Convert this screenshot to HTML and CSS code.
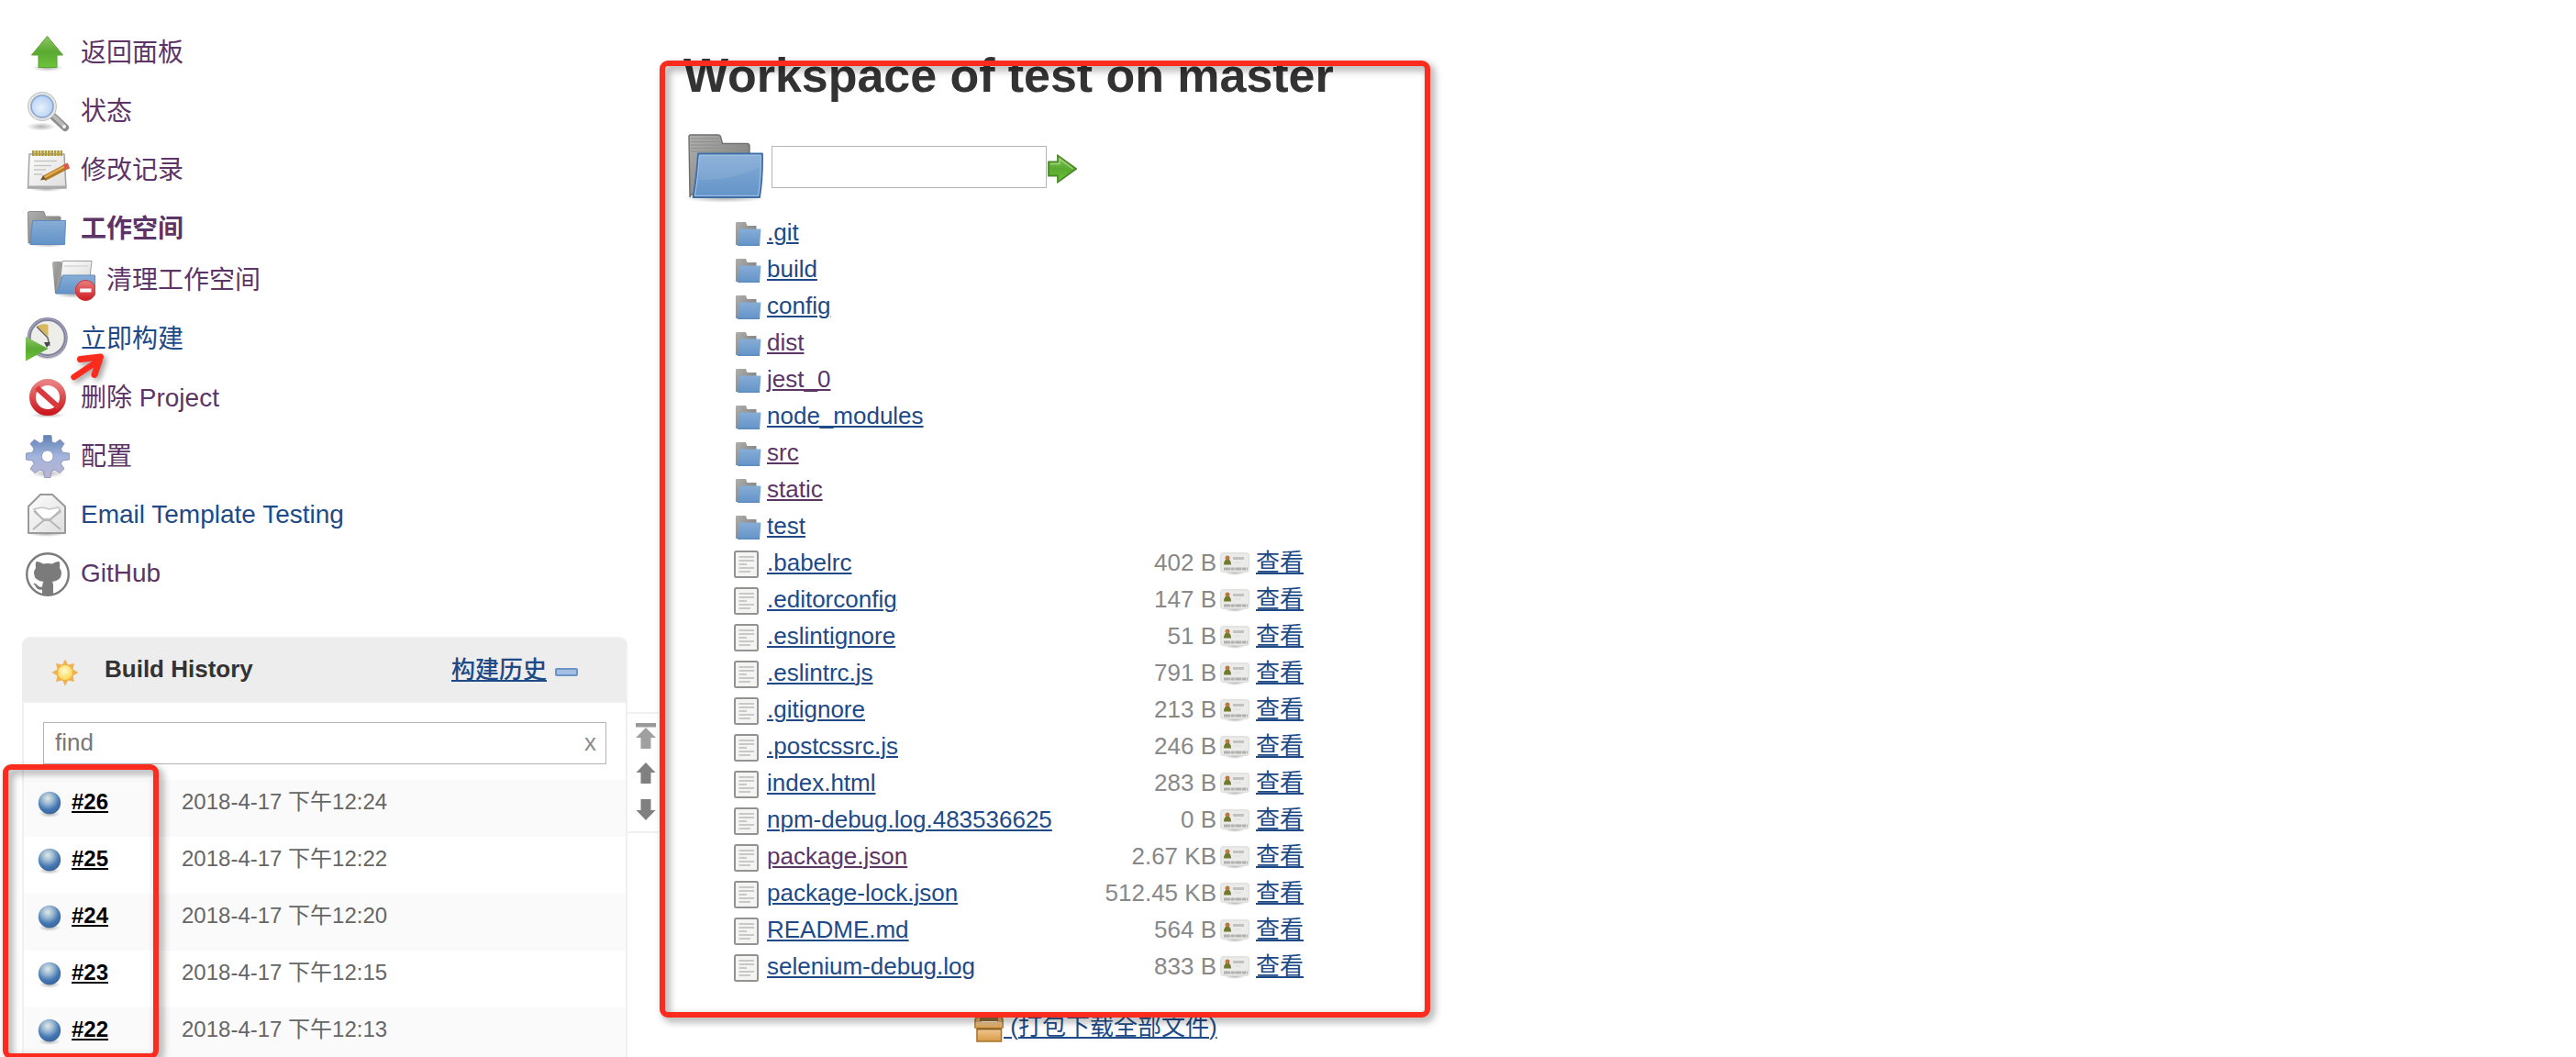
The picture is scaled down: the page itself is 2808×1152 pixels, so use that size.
FILE: index.html
```html
<!DOCTYPE html>
<html lang="zh-CN">
<head>
<meta charset="utf-8">
<title>Workspace of test on master</title>
<link rel="stylesheet" href="styles.css">
</head>
<body>
<svg class="defs" width="0" height="0">
  <defs>
    <linearGradient id="green" x1="0" y1="0" x2="0" y2="1"><stop offset="0" stop-color="#8cc763"/><stop offset=".5" stop-color="#5aa932"/><stop offset="1" stop-color="#6cc43a"/></linearGradient>
    <linearGradient id="blue" x1="0" y1="0" x2="0" y2="1"><stop offset="0" stop-color="#86add6"/><stop offset="1" stop-color="#6393c8"/></linearGradient>
    <linearGradient id="grey" x1="0" y1="0" x2="1" y2="1"><stop offset="0" stop-color="#b0b0ae"/><stop offset="1" stop-color="#6f716e"/></linearGradient>
    <linearGradient id="paper" x1="0" y1="0" x2="1" y2="1"><stop offset="0" stop-color="#fdfdfd"/><stop offset="1" stop-color="#dedede"/></linearGradient>
    <linearGradient id="red" x1="0" y1="0" x2="0" y2="1"><stop offset="0" stop-color="#e98080"/><stop offset="1" stop-color="#cc1a1f"/></linearGradient>
    <linearGradient id="gear" x1="0" y1="0" x2="0" y2="1"><stop offset="0" stop-color="#5f81b4"/><stop offset=".5" stop-color="#a3b5dc"/><stop offset="1" stop-color="#bbb3d2"/></linearGradient>
    <linearGradient id="box" x1="0" y1="0" x2="0" y2="1"><stop offset="0" stop-color="#efc995"/><stop offset="1" stop-color="#d89a45"/></linearGradient>
    <radialGradient id="lens" cx=".45" cy=".55" r=".6"><stop offset="0" stop-color="#e6f1fd"/><stop offset="1" stop-color="#a9c8f0"/></radialGradient>
    <radialGradient id="ball" cx=".42" cy=".3" r=".68"><stop offset="0" stop-color="#e0eae4"/><stop offset=".35" stop-color="#9fbbd3"/><stop offset=".75" stop-color="#4377b3"/><stop offset="1" stop-color="#3a689f"/></radialGradient>
    <radialGradient id="sun" cx=".45" cy=".4" r=".6"><stop offset="0" stop-color="#fffbd0"/><stop offset="1" stop-color="#fbd54e"/></radialGradient>
    <radialGradient id="shade"><stop offset="0" stop-color="#000" stop-opacity=".3"/><stop offset="1" stop-color="#000" stop-opacity="0"/></radialGradient>
  </defs>
  <symbol id="i-folder" viewBox="0 0 32 32">
    <path d="M4 29V5Q4 4 5 4H15L16.500 8H26.500V28Z" fill="url(#grey)"/>
    <path d="M7.500 11.500H31.500L30 30H6Z" fill="url(#blue)"/>
    <path d="M6 30H30L30.300 28.500H6.500Z" fill="#5f8bbf"/>
  </symbol>
  <symbol id="i-doc" viewBox="0 0 32 32">
    <rect x="3" y="3" width="25" height="28" rx="1.500" fill="#f4f4f3" stroke="#939391" stroke-width="2"/>
    <path d="M7.500 9H24M7.500 13H24M7.500 17H16M7.500 21H24M7.500 25H20" stroke="#c9c9c7" stroke-width="2"/>
  </symbol>
  <symbol id="i-view" viewBox="0 0 32 32">
    <ellipse cx="16" cy="26" rx="12" ry="3" fill="url(#shade)"/>
    <rect x=".8" y="4.800" width="30.500" height="20.500" rx="2" fill="#ebebea" stroke="#d8d8d7"/>
    <path d="M4 17.500Q4 12 8 11Q12 12 12 17.500Z" fill="#6f7a2c"/>
    <circle cx="8" cy="10" r="2.500" fill="#b87a43"/>
    <path d="M14 10.500H26" stroke="#c2c2c2" stroke-width="3"/><path d="M15 15H23" stroke="#dadada"/>
    <path d="M4 22H30" stroke="#b0b0b0" stroke-width="3" stroke-dasharray="7 .7 4 .7"/>
  </symbol>
  <symbol id="i-ball" viewBox="0 0 32 32">
    <ellipse cx="16" cy="27" rx="12" ry="4" fill="url(#shade)"/>
    <circle cx="16" cy="15" r="12.200" fill="url(#ball)"/>
  </symbol>
</svg>

<aside class="side">
  <nav class="tasks">
    <a class="task han visited" href="#"><svg class="icon" viewBox="0 0 48 48"><ellipse cx="24" cy="40" rx="17" ry="4" fill="url(#shade)"/><path d="M23.500 5.500 40.500 26H34V39.500H14V26H6.500Z" fill="url(#green)" stroke="#5aa135" stroke-linejoin="round"/></svg><span>返回面板</span></a>
    <a class="task han visited" href="#"><svg class="icon" viewBox="0 0 48 48"><ellipse cx="17" cy="40" rx="16" ry="4.500" fill="url(#shade)"/><path d="M29 28 43 41" stroke="#8d8f8c" stroke-width="8" stroke-linecap="round"/><path d="M30 28 42 39.500" stroke="#b9bab8" stroke-width="4" stroke-linecap="round"/><circle cx="42" cy="40" r="2" fill="#eee"/><circle cx="18" cy="18" r="14" fill="url(#lens)" stroke="#c2c5c4" stroke-width="4"/><circle cx="18" cy="18" r="14" fill="none" stroke="#e9ebea" stroke-width="1.600"/><circle cx="18" cy="18" r="11.800" fill="none" stroke="#7fa3d4" stroke-width="1.200"/></svg><span>状态</span></a>
    <a class="task han visited" href="#"><svg class="icon" viewBox="0 0 48 48"><ellipse cx="23" cy="44" rx="18" ry="3" fill="url(#shade)"/><path d="M4 6H42L44 43H2.500Z" fill="url(#paper)" stroke="#a3a3a1" stroke-width="1.500"/><path d="M3 40.500H44V43H3Z" fill="#aaa"/><path d="M7 5H40" stroke="#b09a3a" stroke-width="6" stroke-dasharray="2.600 .8"/><path d="M9 13.500H34M9 18.500H28M9 23H22M9 28H18" stroke="#c6c6c4" stroke-width="1.500"/><path d="M20 32.500 43.500 20" stroke="#b57c28" stroke-width="6"/><path d="M20 31.500 43 19.200" stroke="#e8ae55" stroke-width="2"/><path d="M16 34.500 19 29 22 33.500Z" fill="#6d5433"/><path d="M42 20.500 47 18.500" stroke="#dd5a4b" stroke-width="6.500"/></svg><span>修改记录</span></a>
    <a class="task han visited current" href="#"><svg class="icon" viewBox="0 0 48 48"><ellipse cx="24" cy="40" rx="21" ry="4" fill="url(#shade)"/><path d="M3 39 2.500 6Q2.500 4.500 4 4.500H19Q20 4.500 20.500 6L21.500 10H37Q38 10 38 11V38Z" fill="url(#grey)" stroke="#8a8c89"/><path d="M7.500 14.500H43.500L42.500 40.500H5Z" fill="url(#blue)" stroke="#5d8abf"/></svg><span>工作空间</span></a>
    <a class="task han sub visited" href="#"><svg class="icon" viewBox="0 0 48 48"><ellipse cx="24" cy="39" rx="20" ry="4" fill="url(#shade)"/><path d="M4 38 1 5Q1 3 3 3H10L12 38Z" fill="url(#grey)"/><path d="M5 37 7 4 14 3V30Z" fill="#9b9c9a"/><path d="M12 2.500H44L42 20H10Z" fill="url(#paper)" stroke="#9d9e9c"/><path d="M14 8H40" stroke="#ddd" stroke-width="2"/><path d="M12.500 18H47.500V38H5Q9 30 12.500 18Z" fill="url(#blue)" stroke="#5d8abf"/><circle cx="37.300" cy="34.500" r="11" fill="url(#red)" stroke="#cc3338"/><path d="M31 34.500H43.500" stroke="#fff" stroke-width="4"/></svg><span>清理工作空间</span></a>
    <a class="task han" href="#"><svg class="icon" viewBox="0 0 48 48"><circle cx="24" cy="24" r="21.500" fill="#bbb" opacity=".6"/><circle cx="23.700" cy="22" r="20" fill="#ededea" stroke="#83829c" stroke-width="4"/><circle cx="23.700" cy="22" r="20.500" fill="none" stroke="#a5a4bf" stroke-width="1.200"/><path d="M12 9.500Q18 6 24.500 8V21Z" fill="#d9b95a"/><path d="M24 22 12 10M24 22 26 31" stroke="#666" stroke-width="1.500"/><path d="M20 27H27L23 33Z" fill="#44474a"/><path d="M0 21 24.500 34 0 47.500Z" fill="url(#green)"/></svg><span>立即构建</span></a>
    <a class="task han visited" href="#"><svg class="icon" viewBox="0 0 48 48"><ellipse cx="24" cy="42.500" rx="19" ry="3" fill="url(#shade)"/><circle cx="24" cy="23" r="16.500" fill="none" stroke="url(#red)" stroke-width="7"/><path d="M12 12.500 36 34" stroke="#d9383c" stroke-width="6"/></svg><span>删除 Project</span></a>
    <a class="task han visited" href="#"><svg class="icon" viewBox="0 0 48 48"><ellipse cx="24" cy="42" rx="18" ry="4.500" fill="url(#shade)"/><path fill-rule="evenodd" fill="url(#gear)" stroke="#7f8db5" stroke-width=".8" d="M19.500.5H28L28.500 7.500 32 9 37.500 5 42 9.500 38.500 15 40 19 47.500 20V27L40 28 38.500 31.500 42 37 37 41.500 32 38 28 39.500 27 46.500H20.500L19.500 39.500 15.500 38 10 41.500 5 37 9 31.500 7.500 28 .5 27V20L7.500 19 9 15 5 9.500 9.500 5 15.500 9 19 7.500ZM23.700 17A6.300 6.300 0 1 0 23.800 17Z"/></svg><span>配置</span></a>
    <a class="task" href="#"><svg class="icon" viewBox="0 0 48 48"><ellipse cx="23" cy="44" rx="20" ry="3" fill="url(#shade)"/><path d="M16 1H29L43 14V43H3V14Z" fill="url(#paper)" stroke="#999b98" stroke-width="2" stroke-linejoin="round"/><path d="M9 17 18 15 26 17 36 15 38 20 28 27.500H18Z" fill="#fff" stroke="#c3c4c2" stroke-width="1.500"/><path d="M8 39 20 29H26L38 39M9 19 20 29H26L38 18" fill="none" stroke="#b5b6b4" stroke-width="2"/></svg><span>Email Template Testing</span></a>
    <a class="task visited" href="#"><svg class="icon" viewBox="0 0 48 48"><circle cx="24" cy="24" r="22.800" fill="#fff" stroke="#7b7b7b" stroke-width="2.400"/><path d="M11.500 10Q15 9.500 19 12.500Q24 11.500 29 12.500Q33 9.500 36.500 10Q38 13 37 17Q39 19.500 39 23Q38.500 31 29 32Q30 34 30 36V46.500H18V40.500Q13 41.500 11 37.500Q10 35 8 34Q11 33 13.500 36.500Q15.500 38.500 18 37.500Q18 34 19.500 32Q9.500 31 9 23Q9 19.500 11 17Q10 13 11.500 10Z" fill="#7b7b7b"/></svg><span>GitHub</span></a>
  </nav>

  <div class="history-wrap">
    <section class="history">
      <header class="history-head">
        <svg class="sun" viewBox="0 0 32 32"><path d="M16 1.500 19 7.500 26 6 24.500 12.500 30.500 16 24.500 19.500 26 26 19 24.500 16 30.500 13 24.500 6 26 7.500 19.500 1.500 16 7.500 12.500 6 6 13 7.500Z" fill="#f0b054"/><circle cx="16" cy="16" r="8.500" fill="url(#sun)" stroke="#f2b23e"/></svg>
        <h2>Build History</h2>
        <a class="trend" href="#">构建历史</a>
        <span class="collapse"></span>
      </header>
      <div class="find"><span>find</span><span class="clear">x</span></div>
      <div class="build"><svg viewBox="0 0 32 32"><use href="#i-ball"/></svg><a href="#">#26</a><time>2018-4-17 下午12:24</time></div>
      <div class="build"><svg viewBox="0 0 32 32"><use href="#i-ball"/></svg><a href="#">#25</a><time>2018-4-17 下午12:22</time></div>
      <div class="build"><svg viewBox="0 0 32 32"><use href="#i-ball"/></svg><a href="#">#24</a><time>2018-4-17 下午12:20</time></div>
      <div class="build"><svg viewBox="0 0 32 32"><use href="#i-ball"/></svg><a href="#">#23</a><time>2018-4-17 下午12:15</time></div>
      <div class="build"><svg viewBox="0 0 32 32"><use href="#i-ball"/></svg><a href="#">#22</a><time>2018-4-17 下午12:13</time></div>
    </section>
    <div class="pager">
      <svg viewBox="0 0 24 32"><path d="M1 2H23V6.500H1Z" fill="#999"/><path d="M12 7 23 18H17.500V30H6.500V18H1Z" fill="#a0a0a0"/></svg>
      <svg viewBox="0 0 24 24"><path d="M12 0 22.500 11H17.500V23H6.500V11H1.500Z" fill="#808080"/></svg>
      <svg viewBox="0 0 24 24"><path d="M12 24 22.500 13H17.500V1H6.500V13H1.500Z" fill="#808080"/></svg>
    </div>
  </div>
</aside>

<main class="main">
  <h1>Workspace of test on master</h1>
  <form class="path">
    <svg class="big" viewBox="0 0 96 96"><ellipse cx="46" cy="82" rx="45" ry="5" fill="url(#shade)"/><path d="M8 81 7 15Q7 13 9 13H39Q41 13 41.500 15L43.500 22.500H70Q73 22.500 73 25V78H9Z" fill="url(#grey)" stroke="#6e706d" stroke-width="1.400"/><path d="M9 17H40M9 20.500H41M9 24H71M9 27.500H71M9 31H71" stroke="#8d8f8c"/><path d="M17 33.500H87Q87.500 60 84 81H11.500Q15 62 17 33.500Z" fill="url(#blue)" stroke="#3f6da8" stroke-width="1.800" stroke-linejoin="round"/><path d="M18.500 35.200H85.300Q85.500 60 82.500 79.300H13.500Q17 60 18.500 35.200Z" fill="none" stroke="#a7c5e6" stroke-width="1"/><path d="M18 62Q50 64 84 48V36H19Z" fill="#fff" opacity=".08"/></svg>
    <input type="text" aria-label="path">
    <svg class="go" viewBox="0 0 32 32"><path d="M1 8.500H11V1.500L31 16 11 30.500V23.500H1Z" fill="url(#green)" stroke="#4c8a2a" stroke-width="1.800"/><path d="M3 10.500H13V5L27.500 16" fill="none" stroke="#9fd57c" stroke-width="1.400"/></svg>
  </form>
  <ul class="files">
    <li><svg><use href="#i-folder"/></svg><a href="#">.git</a></li>
    <li><svg><use href="#i-folder"/></svg><a href="#">build</a></li>
    <li><svg><use href="#i-folder"/></svg><a href="#">config</a></li>
    <li><svg><use href="#i-folder"/></svg><a class="visited" href="#">dist</a></li>
    <li><svg><use href="#i-folder"/></svg><a class="visited" href="#">jest_0</a></li>
    <li><svg><use href="#i-folder"/></svg><a href="#">node_modules</a></li>
    <li><svg><use href="#i-folder"/></svg><a class="visited" href="#">src</a></li>
    <li><svg><use href="#i-folder"/></svg><a class="visited" href="#">static</a></li>
    <li><svg><use href="#i-folder"/></svg><a href="#">test</a></li>
    <li><svg><use href="#i-doc"/></svg><a href="#">.babelrc</a><span class="size">402 B</span><svg><use href="#i-view"/></svg><a href="#">查看</a></li>
    <li><svg><use href="#i-doc"/></svg><a href="#">.editorconfig</a><span class="size">147 B</span><svg><use href="#i-view"/></svg><a href="#">查看</a></li>
    <li><svg><use href="#i-doc"/></svg><a href="#">.eslintignore</a><span class="size">51 B</span><svg><use href="#i-view"/></svg><a href="#">查看</a></li>
    <li><svg><use href="#i-doc"/></svg><a href="#">.eslintrc.js</a><span class="size">791 B</span><svg><use href="#i-view"/></svg><a href="#">查看</a></li>
    <li><svg><use href="#i-doc"/></svg><a href="#">.gitignore</a><span class="size">213 B</span><svg><use href="#i-view"/></svg><a href="#">查看</a></li>
    <li><svg><use href="#i-doc"/></svg><a href="#">.postcssrc.js</a><span class="size">246 B</span><svg><use href="#i-view"/></svg><a href="#">查看</a></li>
    <li><svg><use href="#i-doc"/></svg><a href="#">index.html</a><span class="size">283 B</span><svg><use href="#i-view"/></svg><a href="#">查看</a></li>
    <li><svg><use href="#i-doc"/></svg><a href="#">npm-debug.log.483536625</a><span class="size">0 B</span><svg><use href="#i-view"/></svg><a href="#">查看</a></li>
    <li><svg><use href="#i-doc"/></svg><a class="visited" href="#">package.json</a><span class="size">2.67 KB</span><svg><use href="#i-view"/></svg><a href="#">查看</a></li>
    <li><svg><use href="#i-doc"/></svg><a href="#">package-lock.json</a><span class="size">512.45 KB</span><svg><use href="#i-view"/></svg><a href="#">查看</a></li>
    <li><svg><use href="#i-doc"/></svg><a href="#">README.md</a><span class="size">564 B</span><svg><use href="#i-view"/></svg><a href="#">查看</a></li>
    <li><svg><use href="#i-doc"/></svg><a href="#">selenium-debug.log</a><span class="size">833 B</span><svg><use href="#i-view"/></svg><a href="#">查看</a></li>
  </ul>
  <div class="archive"><svg viewBox="0 0 32 32"><path d="M5 1H27L31 7V16H1V7Z" fill="#d9a865" stroke="#a06f2e" stroke-width="1.600"/><path d="M6 4H26V9H6Z" fill="#8f6a3a"/><path d="M8 9H25V11H8Z" fill="#fff3dc"/><path d="M1.500 10H30.500V17H1.500Z" fill="url(#box)"/><path d="M3 17H29.500V31H3Z" fill="url(#box)" stroke="#a8742f" stroke-width="1.600"/><path d="M3 17.500H29.500" stroke="#8a5f26" stroke-width="1.800"/></svg><a href="#"> (打包下载全部文件)</a></div>
</main>

<div class="mark mark-files"></div>
<div class="mark mark-builds"></div>
<svg class="mark-arrow" viewBox="0 0 44 40"><path d="M9.500 34 32 19" stroke-width="6.500"/><path d="M16.500 14.500 38.500 12 32 31.500" stroke-width="7"/></svg>
</body>
</html>
```
FILE: styles.css
```css
* { box-sizing: border-box; }

body {
  position: relative;
  display: flex;
  height: 1152px;
  margin: 0;
  overflow: hidden;
  background: #fff;
  color: #333;
  font: 26px "Liberation Sans", "Noto Sans CJK SC", sans-serif;
}

a { color: #204a87; text-decoration-thickness: 2px; text-underline-offset: 2px; }
a.visited { color: #5c3566; }
svg { flex: none; display: block; }
.defs { position: absolute; }

/* Sidebar */
.side { flex: none; width: 718px; }

.tasks { padding: 26px 0 36px 28px; }
.task {
  display: flex;
  align-items: center;
  gap: 12px;
  height: 64px;
  font-size: 28px;
  text-decoration: none;
}
.task span { padding-bottom: 3px; }
.task.han span { padding-bottom: 6px; }
.task .icon { width: 48px; height: 48px; }
.task.current { font-weight: 700; }
.task.sub { height: 48px; margin: 0 0 8px 28px; }

.history-wrap { display: flex; align-items: flex-start; padding-left: 24px; }
.history {
  flex: none;
  width: 660px;
  height: 480px;
  border: 2px solid #f0f0f0;
  border-radius: 9px 9px 0 0;
}
.history-head {
  display: flex;
  align-items: center;
  height: 72px;
  margin: -2px -2px 21px;
  padding: 0 54px 0 31px;
  border: solid #f0f0f0;
  border-width: 2px 2px 2px 0;
  border-radius: 9px 9px 0 0;
  background: #ededed;
  line-height: 66px;
}
.sun { width: 32px; height: 32px; margin-top: 5px; }
.history-head h2 { margin: -2px auto 0 27px; font-size: 26px; }
.trend { font-weight: 500; }
.collapse {
  width: 25px;
  height: 9px;
  margin: 4px -2px 0 9px;
  border: 2px solid #6b94c4;
  border-radius: 2px;
  background: #a3c0e2;
}
.find {
  display: flex;
  justify-content: space-between;
  height: 46px;
  margin: 0 21px 17px;
  padding: 0 10px 0 12px;
  border: 1px solid #b5b5b5;
  color: #777;
  line-height: 42px;
}
.clear { color: #8c8c8c; }
.build {
  display: flex;
  align-items: flex-start;
  height: 62px;
  padding-left: 12px;
  font-size: 24px;
  line-height: 48px;
}
.build:nth-of-type(even) { background: #fafafa; }
.build svg { width: 32px; height: 32px; margin-top: 10px; }
.build a { width: 120px; margin-left: 8px; color: #000; font-weight: 700; }
.build time { color: #666; }

.pager {
  display: flex;
  flex-direction: column;
  align-items: center;
  width: 36px;
  height: 132px;
  margin-top: 82px;
  padding: 8px 0 0 6px;
  border: solid #f0f0f0;
  border-width: 2px 0;
}
.pager svg { width: 24px; height: 24px; margin-bottom: 15px; }
.pager svg:first-child { height: 32px; margin-bottom: 13px; }

/* Workspace */
.main { flex: none; width: 703px; padding: 52px 0 0 26px; }
h1 {
  margin: 0 0 22px;
  padding-left: 1px;
  font-size: 52px;
  line-height: 60px;
  letter-spacing: -.05px;
  white-space: nowrap;
}
.path { display: flex; align-items: center; height: 96px; margin-bottom: 3px; }
.big { width: 96px; height: 96px; }
.path input { width: 300px; height: 46px; margin: 0 1px; border: 1px solid #b5b5b5; background: #fff; }
.go { width: 32px; height: 32px; margin-top: 4px; }

.files { margin: 0; padding: 0 0 0 54px; list-style: none; line-height: 40px; }
.files li { display: flex; align-items: center; height: 40px; gap: 6px; }
.files svg { width: 32px; height: 32px; margin-top: 2px; }
.size { margin-left: auto; color: #888; white-space: nowrap; }
.files .size + svg { margin: 2px 1px 0 -2px; }
.files li > a:last-child { white-space: nowrap; }

.archive { display: flex; align-items: center; padding: 26px 0 0 318px; line-height: 40px; white-space: pre; }
.archive svg { width: 32px; height: 32px; margin-top: 2px; }

/* Hand-drawn marks over the page */
.mark {
  position: absolute;
  border: 6px solid #fb2b1e;
  border-radius: 9px;
  filter: drop-shadow(4px 4px 4px rgba(0, 0, 0, .42));
}
.mark-files { left: 719px; top: 66px; width: 840px; height: 1043px; }
.mark-builds { left: 3px; top: 833px; width: 170px; height: 321px; }
.mark-arrow {
  position: absolute;
  left: 71px;
  top: 377px;
  width: 44px;
  height: 40px;
  overflow: visible;
  fill: none;
  stroke: #fb2b1e;
  stroke-linecap: round;
  stroke-linejoin: round;
  filter: drop-shadow(3px 3px 3px rgba(0, 0, 0, .4));
}
```
